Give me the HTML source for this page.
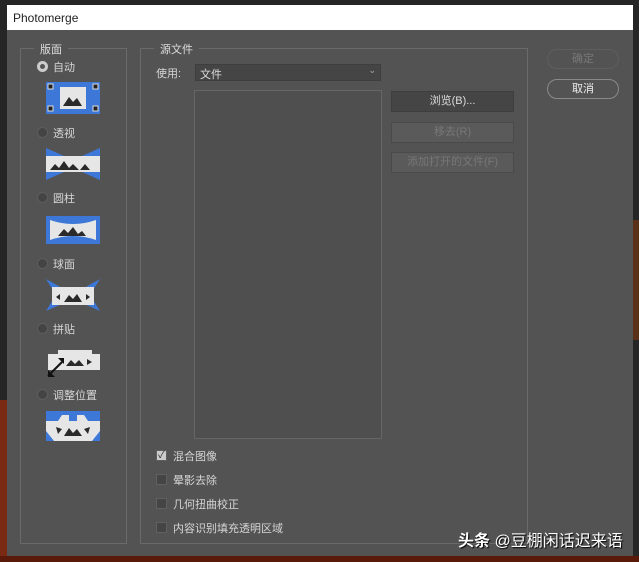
<!DOCTYPE html>
<html><head><meta charset="utf-8"><style>
*{margin:0;padding:0;box-sizing:border-box}
body{width:639px;height:562px;background:#262626;position:relative;overflow:hidden;font-family:"Liberation Sans","Noto Sans CJK SC",sans-serif;font-size:11px;color:#d6d6d6}
.a{position:absolute}
#dlg{left:7px;top:5px;width:626px;height:551px;background:#535353}
#title{left:7px;top:5px;width:626px;height:25px;background:#fff;color:#222;font-size:12px;padding:6px 0 0 6px}
.grp{border:1px solid #6a6a6a}
.lg{background:#535353;padding:0 6px;font-size:11px;color:#ddd}
.rad{width:11px;height:11px;border-radius:50%;background:#444;border:1px solid #5e5e5e}
.btn{border:1px solid #4a4a4a;background:#5a5a5a;text-align:center;font-size:11px;color:#777;line-height:18px}
.cb{width:11px;height:11px;background:#454545;border:1px solid #606060}
</style></head><body>
<div class="a" style="left:0;top:400px;width:7px;height:162px;background:#7a2a12"></div>
<div class="a" style="left:633px;top:220px;width:6px;height:120px;background:#5a3018"></div>
<div class="a" style="left:0;top:556px;width:639px;height:6px;background:#5a1a0a"></div>
<div class="a" id="dlg"></div>
<div class="a" id="title">Photomerge</div>

<div class="a grp" style="left:20px;top:48px;width:107px;height:496px"></div>
<div class="a lg" style="left:34px;top:41px">版面</div>
<div class="a grp" style="left:140px;top:48px;width:388px;height:496px"></div>
<div class="a lg" style="left:154px;top:41px">源文件</div>

<div class="a rad" style="left:37px;top:61px;background:#ccc;border-color:#ccc"><div style="width:5px;height:5px;border-radius:50%;background:#555;margin:2px"></div></div>
<div class="a" style="left:53px;top:59px">自动</div>
<div class="a rad" style="left:37px;top:127px"></div><div class="a" style="left:53px;top:125px">透视</div>
<div class="a rad" style="left:37px;top:192px"></div><div class="a" style="left:53px;top:190px">圆柱</div>
<div class="a rad" style="left:37px;top:258px"></div><div class="a" style="left:53px;top:256px">球面</div>
<div class="a rad" style="left:37px;top:323px"></div><div class="a" style="left:53px;top:321px">拼贴</div>
<div class="a rad" style="left:37px;top:389px"></div><div class="a" style="left:53px;top:387px">调整位置</div>

<svg class="a" style="left:44px;top:80px" width="58" height="36"><rect x="2" y="2" width="54" height="32" fill="#3d78d8"/><rect x="16" y="7" width="26" height="22" fill="#e6e6e6"/><path d="M19 26l6-9 4 5 4-4 5 8z" fill="#2a2a2a"/><rect x="4" y="4" width="5" height="5" fill="#222" stroke="#ddd"/><rect x="49" y="4" width="5" height="5" fill="#222" stroke="#ddd"/><rect x="4" y="26" width="5" height="5" fill="#222" stroke="#ddd"/><rect x="49" y="26" width="5" height="5" fill="#222" stroke="#ddd"/></svg>
<svg class="a" style="left:44px;top:146px" width="58" height="36"><path d="M2 2L20 10V26L2 34z M56 2L38 10V26L56 34z" fill="#3d78d8"/><rect x="2" y="10" width="54" height="16" fill="#e6e6e6"/><path d="M6 24l5-6 4 4 5-7 5 7 4-4 6 6z M36 24l5-6 5 6z" fill="#2a2a2a"/></svg>
<svg class="a" style="left:44px;top:212px" width="58" height="36"><path d="M2 4h54v28H2z" fill="#3d78d8"/><path d="M6 8q23 8 46 0v20q-23-8-46 0z" fill="#e6e6e6"/><path d="M14 24l6-7 4 4 5-6 5 7 4-3 4 5z" fill="#2a2a2a"/></svg>
<svg class="a" style="left:44px;top:277px" width="58" height="36"><path d="M2 2L20 12H38L56 2L46 18L56 34L38 26H20L2 34L12 18z" fill="#3d78d8"/><rect x="8" y="10" width="42" height="18" fill="#e6e6e6"/><path d="M12 20l4-3v6z M46 20l-4-3v6z M20 25l5-7 4 4 4-5 5 8z" fill="#2a2a2a"/></svg>
<svg class="a" style="left:44px;top:344px" width="58" height="36"><path d="M4 10h10V6h34v4h8v16H4z" fill="#e6e6e6"/><path d="M22 22l5-6 4 4 4-4 5 6z M48 18l-5-3v6z" fill="#2a2a2a"/><path d="M4 32l14-14" stroke="#111" stroke-width="2"/><path d="M4 26v7h7z M20 14h-6l6 6z" fill="#111"/></svg>
<svg class="a" style="left:44px;top:409px" width="58" height="34"><rect x="2" y="2" width="54" height="30" fill="#3d78d8"/><path d="M2 12h12l4-6h7v6h8V6h7l4 6h12v10L48 32H10L2 22z" fill="#e6e6e6"/><path d="M12 18l6 2-4 5z M46 18l-6 2 4 5z M20 27l5-8 4 5 4-4 5 7z" fill="#2a2a2a"/></svg>

<div class="a" style="left:156px;top:65px">使用:</div>
<div class="a" style="left:195px;top:64px;width:186px;height:17px;background:#454545;border:1px solid #3e3e3e;padding:1px 4px;color:#ddd">文件<span style="position:absolute;right:4px;top:0;color:#aaa;font-size:9px">⌄</span></div>
<div class="a" style="left:194px;top:90px;width:188px;height:349px;background:#4f4f4f;border:1px solid #666"></div>
<div class="a btn" style="left:391px;top:91px;width:123px;height:21px;background:#454545;color:#ddd;border-color:#3e3e3e">浏览(B)...</div>
<div class="a btn" style="left:391px;top:122px;width:123px;height:21px">移去(R)</div>
<div class="a btn" style="left:391px;top:152px;width:123px;height:21px">添加打开的文件(F)</div>
<div class="a btn" style="left:547px;top:49px;width:72px;height:20px;border-radius:10px;background:#535353;border-color:#5e5e5e">确定</div>
<div class="a btn" style="left:547px;top:79px;width:72px;height:20px;border-radius:10px;background:#535353;border-color:#8a8a8a;color:#eee">取消</div>

<div class="a cb" style="left:156px;top:450px;background:#ccc;color:#333;font-size:10px;line-height:9px;text-align:center">✓</div><div class="a" style="left:173px;top:448px">混合图像</div>
<div class="a cb" style="left:156px;top:474px"></div><div class="a" style="left:173px;top:472px">晕影去除</div>
<div class="a cb" style="left:156px;top:498px"></div><div class="a" style="left:173px;top:496px">几何扭曲校正</div>
<div class="a cb" style="left:156px;top:522px"></div><div class="a" style="left:173px;top:520px">内容识别填充透明区域</div>

<div class="a" style="left:458px;top:527px;font-size:16px;color:#fff;text-shadow:1px 1px 1px #000;white-space:nowrap"><b>头条</b> @豆棚闲话迟来语</div>
</body></html>
